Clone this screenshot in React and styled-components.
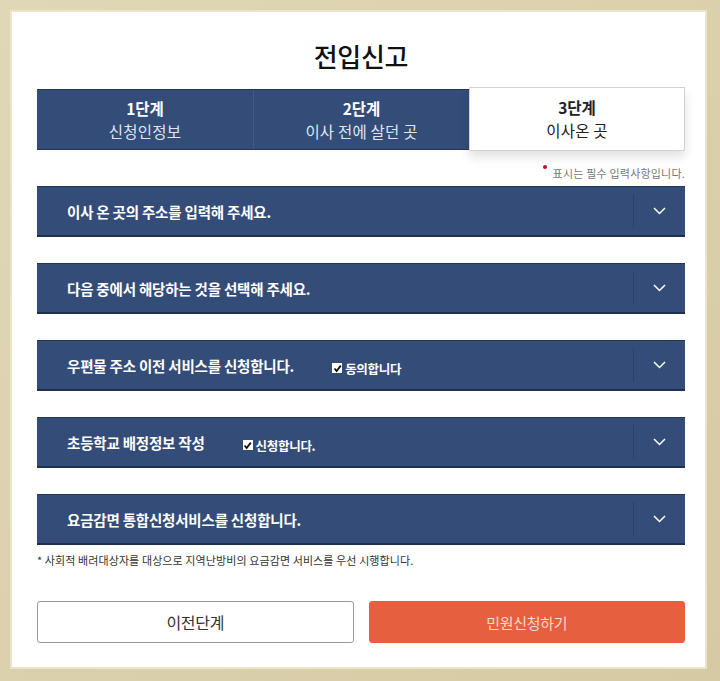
import React from 'react';
import styled, { createGlobalStyle } from 'styled-components';

const GlobalStyle = createGlobalStyle`
  html, body {
    margin: 0;
    padding: 0;
    background: #d9cfa9;
  }
  body {
    font-family: "Noto Sans CJK KR", "Noto Sans", "Liberation Sans", sans-serif;
  }
`;

const Frame = styled.div`
  box-sizing: border-box;
  width: 720px;
  height: 681px;
  padding: 12px 15px 14px 12px;
  background: linear-gradient(135deg, #e0d7b6 0%, #d5caa3 100%);
`;

const Panel = styled.div`
  box-sizing: border-box;
  height: 655px;
  background: #fff;
  padding: 25px 20px 23px 25px;
  box-shadow: 0 0 0 2px #ebe4cc;
  display: flex;
  flex-direction: column;
`;

const Title = styled.h1`
  margin: 0 0 16px;
  text-align: center;
  font-size: 26px;
  line-height: 38px;
  font-weight: 500;
  color: #111;
  letter-spacing: -0.3px;
`;

const Steps = styled.div`
  display: grid;
  grid-template-columns: repeat(3, 1fr);
  height: 61px;
  margin-top: -2px;
  background: #344c78;
  border-top: 1px solid #22365a;
  border-bottom: 1px solid #22365a;
  box-sizing: border-box;
`;

const Step = styled.div`
  display: flex;
  flex-direction: column;
  align-items: center;
  justify-content: center;
  color: ${p => (p.$active ? '#222' : '#dfe6f2')};
  background: ${p => (p.$active ? '#fff' : 'transparent')};
  border-left: ${p => (p.$first || p.$active ? 'none' : '1px solid #42598a')};
  ${p => p.$active && `
    margin: -3px 0 -2px;
    border: 1px solid #d2d2d2;
    box-shadow: 0 6px 10px rgba(0, 0, 0, 0.12);
    position: relative;
    z-index: 1;
  `}
`;

const StepNum = styled.span`
  font-size: 15.5px;
  line-height: 23px;
  font-weight: 700;
  color: ${p => (p.$active ? '#222' : '#fff')};
`;

const StepName = styled.span`
  font-size: 15.5px;
  line-height: 23px;
  font-weight: 400;
  letter-spacing: 0.2px;
`;

const Note = styled.p`
  margin: 0;
  padding: 15px 0 5px;
  text-align: right;
  font-size: 11px;
  line-height: 16px;
  letter-spacing: 0.2px;
  color: #777;
`;

const Dot = styled.span`
  display: inline-block;
  width: 4px;
  height: 4px;
  border-radius: 50%;
  background: #c8102e;
  margin-right: 6px;
  vertical-align: 9px;
`;

const Sections = styled.div`
  display: flex;
  flex-direction: column;
  gap: 26px;
`;

const Bar = styled.div`
  box-sizing: border-box;
  height: 51px;
  display: flex;
  align-items: stretch;
  background: #344c78;
  border-top: 1px solid #22365a;
  border-bottom: 2px solid #1e2f50;
`;

const BarLabel = styled.div`
  flex: 1;
  display: flex;
  align-items: center;
  padding-left: 30px;
  color: #fff;
  font-size: 14.5px;
  font-weight: 700;
  letter-spacing: -0.2px;
`;

const Check = styled.label`
  display: inline-flex;
  align-items: center;
  gap: 3px;
  margin-left: ${p => p.$gap}px;
  margin-top: 6px;
  font-size: 12.5px;
  font-weight: 700;
  letter-spacing: -0.3px;
  color: #fff;
`;

const Box = styled.span`
  width: 10px;
  height: 10px;
  background: #fff;
  display: inline-flex;
  align-items: center;
  justify-content: center;
`;

const Toggle = styled.div`
  width: 52px;
  display: flex;
  align-items: center;
  justify-content: center;
  position: relative;
  &::before {
    content: '';
    position: absolute;
    left: 0;
    top: 7px;
    bottom: 7px;
    width: 1px;
    background: #2b416a;
  }
`;

const Footnote = styled.p`
  margin: 0;
  padding-top: 7px;
  font-size: 11px;
  line-height: 16px;
  letter-spacing: 0.1px;
  color: #333;
`;

const Buttons = styled.div`
  margin-top: 33px;
  display: grid;
  grid-template-columns: 1fr 1fr;
  gap: 15px;
`;

const Button = styled.button`
  height: 42px;
  border-radius: 3px;
  font-family: inherit;
  font-size: ${p => (p.$primary ? '15px' : '16px')};
  letter-spacing: -0.3px;
  cursor: pointer;
  border: 1px solid ${p => (p.$primary ? '#e55e3e' : '#9a9a9a')};
  background: ${p => (p.$primary ? '#e65f3f' : '#fff')};
  color: ${p => (p.$primary ? '#fbd9cc' : '#333')};
`;

const Chevron = () => (
  <svg width="13" height="8" viewBox="0 0 13 8">
    <path d="M1 1 L6.5 6.5 L12 1" fill="none" stroke="#fff" strokeWidth="1.5" />
  </svg>
);

const Tick = () => (
  <svg width="9" height="9" viewBox="0 0 9 9">
    <path d="M1.5 4.5 L3.6 7 L7.8 1.6" fill="none" stroke="#111" strokeWidth="1.8" />
  </svg>
);

const sections = [
  { text: '이사 온 곳의 주소를 입력해 주세요.' },
  { text: '다음 중에서 해당하는 것을 선택해 주세요.' },
  { text: '우편물 주소 이전 서비스를 신청합니다.', check: '동의합니다', gap: 38 },
  { text: '초등학교 배정정보 작성', check: '신청합니다.', gap: 38 },
  { text: '요금감면 통합신청서비스를 신청합니다.' },
];

const steps = [
  { num: '1단계', name: '신청인정보' },
  { num: '2단계', name: '이사 전에 살던 곳' },
  { num: '3단계', name: '이사온 곳', active: true },
];

export default function App() {
  return (
    <>
      <GlobalStyle />
      <Frame>
        <Panel>
          <Title>전입신고</Title>
          <Steps>
            {steps.map((s, i) => (
              <Step key={s.num} $active={s.active} $first={i === 0}>
                <StepNum $active={s.active}>{s.num}</StepNum>
                <StepName>{s.name}</StepName>
              </Step>
            ))}
          </Steps>
          <Note>
            <Dot />
            표시는 필수 입력사항입니다.
          </Note>
          <Sections>
            {sections.map(s => (
              <Bar key={s.text}>
                <BarLabel>
                  {s.text}
                  {s.check && (
                    <Check $gap={s.gap}>
                      <Box>
                        <Tick />
                      </Box>
                      {s.check}
                    </Check>
                  )}
                </BarLabel>
                <Toggle>
                  <Chevron />
                </Toggle>
              </Bar>
            ))}
          </Sections>
          <Footnote>* 사회적 배려대상자를 대상으로 지역난방비의 요금감면 서비스를 우선 시행합니다.</Footnote>
          <Buttons>
            <Button>이전단계</Button>
            <Button $primary>민원신청하기</Button>
          </Buttons>
        </Panel>
      </Frame>
    </>
  );
}
